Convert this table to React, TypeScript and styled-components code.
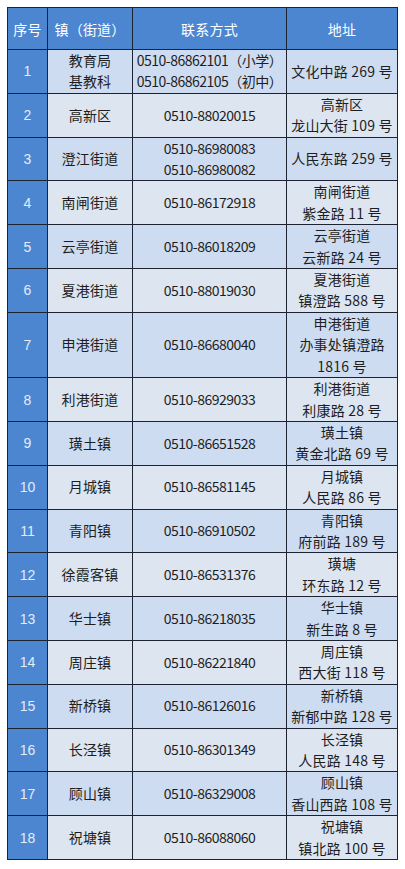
import React from 'react'
import styled, { createGlobalStyle } from 'styled-components'

type Row = {
  town: string[]
  phone: string[]
  addr: string[]
}

const rows: Row[] = [
  { town: ['教育局', '基教科'], phone: ['0510-86862101（小学）', '0510-86862105（初中）'], addr: ['文化中路 269 号'] },
  { town: ['高新区'], phone: ['0510-88020015'], addr: ['高新区', '龙山大街 109 号'] },
  { town: ['澄江街道'], phone: ['0510-86980083', '0510-86980082'], addr: ['人民东路 259 号'] },
  { town: ['南闸街道'], phone: ['0510-86172918'], addr: ['南闸街道', '紫金路 11 号'] },
  { town: ['云亭街道'], phone: ['0510-86018209'], addr: ['云亭街道', '云新路 24 号'] },
  { town: ['夏港街道'], phone: ['0510-88019030'], addr: ['夏港街道', '镇澄路 588 号'] },
  { town: ['申港街道'], phone: ['0510-86680040'], addr: ['申港街道', '办事处镇澄路', '1816 号'] },
  { town: ['利港街道'], phone: ['0510-86929033'], addr: ['利港街道', '利康路 28 号'] },
  { town: ['璜土镇'], phone: ['0510-86651528'], addr: ['璜土镇', '黄金北路 69 号'] },
  { town: ['月城镇'], phone: ['0510-86581145'], addr: ['月城镇', '人民路 86 号'] },
  { town: ['青阳镇'], phone: ['0510-86910502'], addr: ['青阳镇', '府前路 189 号'] },
  { town: ['徐霞客镇'], phone: ['0510-86531376'], addr: ['璜塘', '环东路 12 号'] },
  { town: ['华士镇'], phone: ['0510-86218035'], addr: ['华士镇', '新生路 8 号'] },
  { town: ['周庄镇'], phone: ['0510-86221840'], addr: ['周庄镇', '西大街 118 号'] },
  { town: ['新桥镇'], phone: ['0510-86126016'], addr: ['新桥镇', '新郁中路 128 号'] },
  { town: ['长泾镇'], phone: ['0510-86301349'], addr: ['长泾镇', '人民路 148 号'] },
  { town: ['顾山镇'], phone: ['0510-86329008'], addr: ['顾山镇', '香山西路 108 号'] },
  { town: ['祝塘镇'], phone: ['0510-86088060'], addr: ['祝塘镇', '镇北路 100 号'] },
]

const GlobalStyle = createGlobalStyle`
  body {
    margin: 0;
    background: #ffffff;
    font-family: "Noto Sans CJK SC", "Noto Sans", sans-serif;
  }
`

const Page = styled.div`
  padding: 7px 0 0 7px;
`

const Table = styled.table`
  border-collapse: collapse;
  table-layout: fixed;
  width: 390px;
  border: 1px solid #1c2230;
`

const HeadCell = styled.th`
  height: 41px;
  padding: 0;
  background: #4c86d1;
  color: #ffffff;
  font-weight: 400;
  font-size: 14px;
  letter-spacing: 0.2px;
  border: 1px solid #1c2230;
  text-align: center;
  vertical-align: middle;
`

const Cell = styled.td<{ $odd: boolean }>`
  padding: 0;
  background: ${({ $odd }) => ($odd ? '#cedcf1' : '#dde5f0')};
  color: #1e1e22;
  font-size: 14px;
  line-height: 21.4px;
  letter-spacing: 0.2px;
  border: 1px solid #1c2230;
  text-align: center;
  vertical-align: middle;
  white-space: nowrap;
`

const IndexCell = styled.td`
  padding: 0;
  background: #4c86d1;
  color: #e4ecf8;
  font-family: "Liberation Sans", Arial, sans-serif;
  font-size: 14px;
  border: 1px solid #1c2230;
  text-align: center;
  vertical-align: middle;
`

const Line = styled.div`
  display: block;
`

const Phone = styled.div`
  letter-spacing: -0.5px;
`

function Lines({ items }: { items: string[] }) {
  return (
    <>
      {items.map((t) => (
        <Line key={t}>{t}</Line>
      ))}
    </>
  )
}

export default function App() {
  return (
    <Page>
      <GlobalStyle />
      <Table>
        <colgroup>
          <col style={{ width: 40 }} />
          <col style={{ width: 85 }} />
          <col style={{ width: 154 }} />
          <col style={{ width: 111 }} />
        </colgroup>
        <thead>
          <tr>
            <HeadCell>序号</HeadCell>
            <HeadCell>镇（街道）</HeadCell>
            <HeadCell>联系方式</HeadCell>
            <HeadCell>地址</HeadCell>
          </tr>
        </thead>
        <tbody>
          {rows.map((r, i) => {
            const odd = i % 2 === 0
            return (
              <tr key={i}>
                <IndexCell>{i + 1}</IndexCell>
                <Cell $odd={odd}>
                  <Lines items={r.town} />
                </Cell>
                <Cell $odd={odd}>
                  {r.phone.map((p) => (
                    <Phone key={p}>{p}</Phone>
                  ))}
                </Cell>
                <Cell $odd={odd}>
                  <Lines items={r.addr} />
                </Cell>
              </tr>
            )
          })}
        </tbody>
      </Table>
    </Page>
  )
}
